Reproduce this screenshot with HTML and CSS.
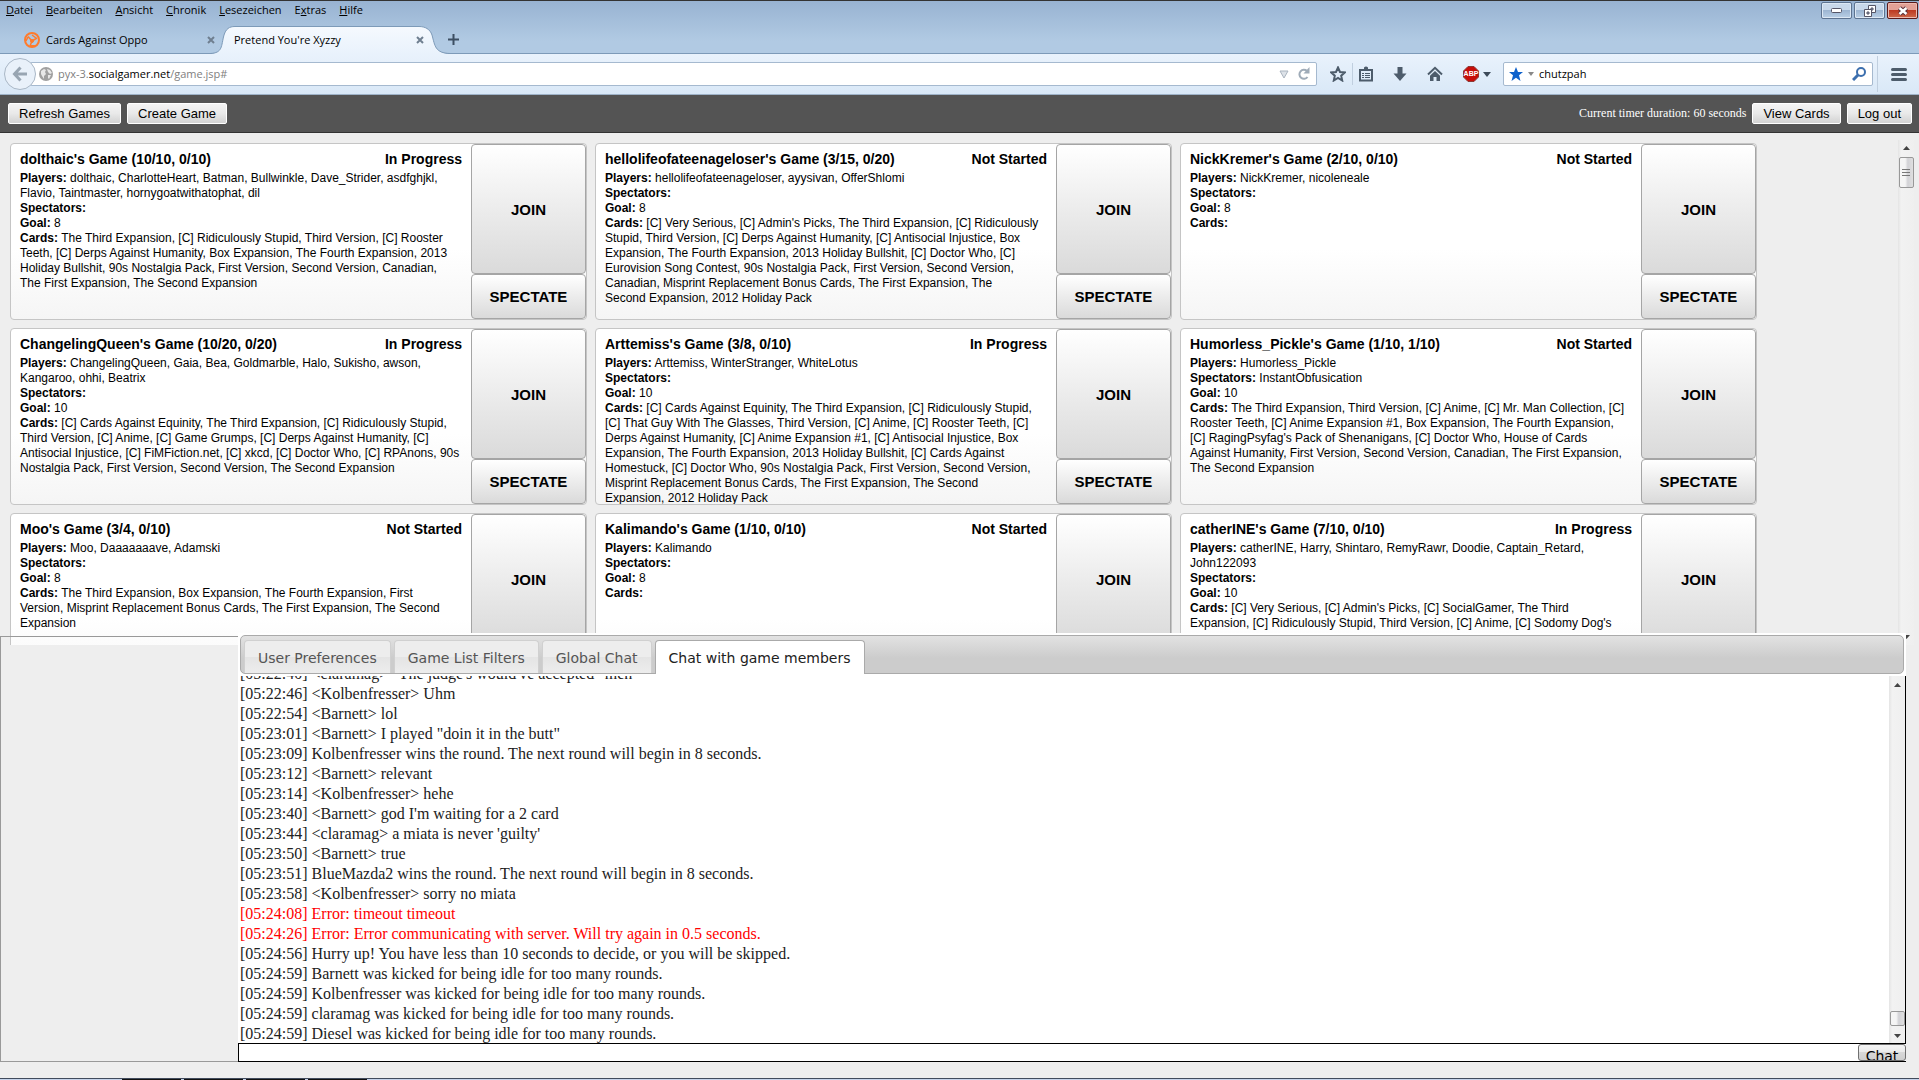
FILE: index.html
```html
<!DOCTYPE html>
<html lang="de">
<head>
<meta charset="utf-8">
<title>Pretend You're Xyzzy</title>
<link rel="stylesheet" href="styles.css">
</head>
<body>
<div class="chrome">
  <div class="menu-row">
    <nav class="menu">
      <a href="#"><u>D</u>atei</a><a href="#"><u>B</u>earbeiten</a><a href="#"><u>A</u>nsicht</a><a href="#"><u>C</u>hronik</a><a href="#"><u>L</u>esezeichen</a><a href="#">E<u>x</u>tras</a><a href="#"><u>H</u>ilfe</a>
    </nav>
    <div class="window-buttons">
      <button aria-label="Minimieren"><svg width="11" height="5" viewBox="0 0 11 5"><rect x=".5" y=".5" width="10" height="4" rx="1" fill="#fff" stroke="#556"/></svg></button>
      <button aria-label="Verkleinern"><svg width="12" height="12" viewBox="0 0 12 12"><path d="M4.500 .5h7v7h-7z" fill="#fff" stroke="#556"/><path d="M7 3h2v2H7z" fill="#9ab" stroke="#556"/><path d="M.5 4.500h7v7h-7z" fill="#fff" stroke="#556"/><path d="M3 7h2v2H3z" fill="#9ab" stroke="#556"/></svg></button>
      <button class="win-close" aria-label="Schließen"><svg width="12" height="10" viewBox="0 0 12 10"><path d="M2.500 2l7 6M9.500 2l-7 6" stroke="#5b3038" stroke-width="4.500"/><path d="M2.500 2l7 6M9.500 2l-7 6" stroke="#fff" stroke-width="2.500"/></svg></button>
    </div>
  </div>
  <div class="tab-strip">
    <div class="tab">
      <svg width="16" height="16" viewBox="0 0 16 16" fill="none" stroke="#ff7b2c"><circle cx="8" cy="8" r="7" stroke-width="2"/><path d="M8 9L4 4.500M8 9l5-3M8 9l-2 5M4 5l-2 4M12 6L8 3M6 13l5 1" stroke-width="1.500"/><circle cx="8" cy="9" r="1.500" fill="#ff7b2c"/></svg>
      <span>Cards Against Oppo</span>
      <button class="tab-close" aria-label="Tab schließen"><svg width="8" height="8" viewBox="0 0 8 8"><path d="M1 1l6 6M7 1L1 7" stroke="#6f7f90" stroke-width="2"/></svg></button>
    </div>
    <div class="tab tab-active">
      <svg class="tab-shape" width="240" height="28" viewBox="0 0 240 28"><defs><linearGradient id="tabfill" x2="0" y2="1"><stop offset="0" stop-color="#f5f9fe"/><stop offset="1" stop-color="#e9f2fc"/></linearGradient></defs><path d="M0 28C13 27 11 20 14 9C16 3 19 .5 25 .5H209C215 .5 220 3 222 9C225 20 225 27 240 28Z" fill="url(#tabfill)"/><path d="M0 27.500C13 27 11 20 14 9C16 3 19 .5 25 .5H209C215 .5 220 3 222 9C225 20 225 27 240 27.500" fill="none" stroke="#7d9ab8"/></svg>
      <span>Pretend You're Xyzzy</span>
      <button class="tab-close" aria-label="Tab schließen"><svg width="8" height="8" viewBox="0 0 8 8"><path d="M1 1l6 6M7 1L1 7" stroke="#6f7f90" stroke-width="2"/></svg></button>
    </div>
    <button class="new-tab" aria-label="Neuer Tab"><svg width="11" height="11" viewBox="0 0 11 11"><path d="M5.500 0v11M0 5.500h11" stroke="#3d4f63" stroke-width="2"/></svg></button>
  </div>
  <div class="nav-bar">
    <button class="back" aria-label="Zurück"><svg width="16" height="16" viewBox="0 0 16 16"><path d="M8.500 1.500L2.500 8l6 6.500M3 8h12" fill="none" stroke="#98a5b2" stroke-width="3"/></svg></button>
    <div class="url-box">
      <svg width="14" height="14" viewBox="0 0 14 14"><circle cx="7" cy="7" r="7" fill="#a0a0a0"/><path d="M2 4l3-2 2 1-1 2 1 2-2 2 0 3-2-3-1-2zM8 2l3 1 2 3-2 1-2-2zM9 8l3 0-2 4-1-1z" fill="#e8e8e8"/></svg>
      <a class="url" href="#">pyx-3.<b>socialgamer.net</b>/game.jsp#</a>
      <svg width="10" height="9" viewBox="0 0 10 9"><path d="M1 1h8L5 8z" fill="#dde2e8" stroke="#aab4bf"/></svg>
      <button class="plain" aria-label="Neu laden"><svg width="12" height="14" viewBox="0 0 12 14"><path d="M9.500 10A4.500 4.500 0 1 1 9 4" fill="none" stroke="#9fabb8" stroke-width="2"/><path d="M11.500 0v6.500H5.500z" fill="#9fabb8"/></svg></button>
    </div>
    <div class="tools">
      <button class="plain" aria-label="Lesezeichen"><svg width="16" height="16" viewBox="0 0 16 16"><path d="M8 1.500l2 4.500 4.800.5-3.600 3.200 1 4.800L8 12l-4.200 2.500 1-4.800L1.200 6.500 6 6z" fill="none" stroke="#4d5c6b" stroke-width="2"/></svg></button>
      <i class="sep"></i>
      <button class="plain" aria-label="Lesezeichenliste"><svg width="14" height="16" viewBox="0 0 14 16"><path d="M1 4h12v10.500H1z" fill="none" stroke="#4d5c6b" stroke-width="2"/><path d="M3 5V3h2V1.500Q7-.5 9 1.500V3h2v2z" fill="#4d5c6b"/><path d="M3 7h2v1H3zM6 7h5v1H6zM3 9h2v1H3zM6 9h5v1H6zM3 11h2v1H3zM6 11h5v1H6z" fill="#4d5c6b"/></svg></button>
      <button class="plain" aria-label="Downloads"><svg width="14" height="16" viewBox="0 0 14 16"><path d="M4.500 1h5v6.500H13.500L7 15 .5 7.500h4z" fill="#4d5c6b"/></svg></button>
      <button class="plain" aria-label="Startseite"><svg width="16" height="16" viewBox="0 0 16 16"><path d="M1 8.500L8 1.800l7 6.700" fill="none" stroke="#4d5c6b" stroke-width="2"/><path d="M8 5l5 4.800V15H9.500v-4h-3v4H3V9.800z" fill="#4d5c6b"/></svg></button>
      <button class="plain abp" aria-label="Adblock Plus"><svg width="16" height="16" viewBox="0 0 16 16"><path d="M5 .5h6L15.500 5v6L11 15.500H5L.5 11V5z" fill="#c70d09" stroke="#8b3a35"/></svg><b>ABP</b></button>
      <svg class="caret" width="8" height="5" viewBox="0 0 8 5"><path d="M0 0h8L4 5z" fill="#3c4a59"/></svg>
    </div>
    <div class="search-box">
      <svg width="14" height="14" viewBox="0 0 14 14"><path d="M7 0l2 5h5l-4 3.300L11.500 14 7 10.700 2.500 14 4 8.300 0 5h5z" fill="#0f62cc"/></svg>
      <svg width="6" height="4" viewBox="0 0 6 4"><path d="M0 0h6L3 4z" fill="#888"/></svg>
      <input type="text" value="chutzpah" aria-label="Suche">
      <button class="plain" aria-label="Suchen"><svg width="14" height="14" viewBox="0 0 14 14"><circle cx="9" cy="5" r="4" fill="none" stroke="#3c6fae" stroke-width="2"/><path d="M6 8l-5 5" stroke="#3c6fae" stroke-width="3"/></svg></button>
    </div>
    <i class="sep sep-tall"></i>
    <button class="plain burger" aria-label="Menü"><svg width="16" height="13" viewBox="0 0 16 13"><path d="M1.500 1.500h13M1.500 6.500h13M1.500 11.500h13" stroke="#4d5c6b" stroke-width="3" stroke-linecap="round"/></svg></button>
  </div>
</div>

<header class="top-bar">
  <button class="btn">Refresh Games</button>
  <button class="btn">Create Game</button>
  <span class="timer">Current timer duration: 60 seconds</span>
  <button class="btn">View Cards</button>
  <button class="btn">Log out</button>
</header>

<main class="games">
  <div class="game-list">
    <article class="game">
      <div class="info"><h2>dolthaic's Game (10/10, 0/10)<span>In Progress</span></h2>
        <p><b>Players:</b> dolthaic, CharlotteHeart, Batman, Bullwinkle, Dave_Strider, asdfghjkl,<br>Flavio, Taintmaster, hornygoatwithatophat, dil</p>
        <p><b>Spectators:</b></p><p><b>Goal:</b> 8</p>
        <p><b>Cards:</b> The Third Expansion, [C] Ridiculously Stupid, Third Version, [C] Rooster<br>Teeth, [C] Derps Against Humanity, Box Expansion, The Fourth Expansion, 2013<br>Holiday Bullshit, 90s Nostalgia Pack, First Version, Second Version, Canadian,<br>The First Expansion, The Second Expansion</p></div>
      <div class="actions"><button class="join">JOIN</button><button class="spectate">SPECTATE</button></div>
    </article>
    <article class="game">
      <div class="info"><h2>hellolifeofateenageloser's Game (3/15, 0/20)<span>Not Started</span></h2>
        <p><b>Players:</b> hellolifeofateenageloser, ayysivan, OfferShlomi</p>
        <p><b>Spectators:</b></p><p><b>Goal:</b> 8</p>
        <p><b>Cards:</b> [C] Very Serious, [C] Admin's Picks, The Third Expansion, [C] Ridiculously<br>Stupid, Third Version, [C] Derps Against Humanity, [C] Antisocial Injustice, Box<br>Expansion, The Fourth Expansion, 2013 Holiday Bullshit, [C] Doctor Who, [C]<br>Eurovision Song Contest, 90s Nostalgia Pack, First Version, Second Version,<br>Canadian, Misprint Replacement Bonus Cards, The First Expansion, The<br>Second Expansion, 2012 Holiday Pack</p></div>
      <div class="actions"><button class="join">JOIN</button><button class="spectate">SPECTATE</button></div>
    </article>
    <article class="game">
      <div class="info"><h2>NickKremer's Game (2/10, 0/10)<span>Not Started</span></h2>
        <p><b>Players:</b> NickKremer, nicoleneale</p>
        <p><b>Spectators:</b></p><p><b>Goal:</b> 8</p>
        <p><b>Cards:</b></p></div>
      <div class="actions"><button class="join">JOIN</button><button class="spectate">SPECTATE</button></div>
    </article>
    <article class="game">
      <div class="info"><h2>ChangelingQueen's Game (10/20, 0/20)<span>In Progress</span></h2>
        <p><b>Players:</b> ChangelingQueen, Gaia, Bea, Goldmarble, Halo, Sukisho, awson,<br>Kangaroo, ohhi, Beatrix</p>
        <p><b>Spectators:</b></p><p><b>Goal:</b> 10</p>
        <p><b>Cards:</b> [C] Cards Against Equinity, The Third Expansion, [C] Ridiculously Stupid,<br>Third Version, [C] Anime, [C] Game Grumps, [C] Derps Against Humanity, [C]<br>Antisocial Injustice, [C] FiMFiction.net, [C] xkcd, [C] Doctor Who, [C] RPAnons, 90s<br>Nostalgia Pack, First Version, Second Version, The Second Expansion</p></div>
      <div class="actions"><button class="join">JOIN</button><button class="spectate">SPECTATE</button></div>
    </article>
    <article class="game">
      <div class="info"><h2>Arttemiss's Game (3/8, 0/10)<span>In Progress</span></h2>
        <p><b>Players:</b> Arttemiss, WinterStranger, WhiteLotus</p>
        <p><b>Spectators:</b></p><p><b>Goal:</b> 10</p>
        <p><b>Cards:</b> [C] Cards Against Equinity, The Third Expansion, [C] Ridiculously Stupid,<br>[C] That Guy With The Glasses, Third Version, [C] Anime, [C] Rooster Teeth, [C]<br>Derps Against Humanity, [C] Anime Expansion #1, [C] Antisocial Injustice, Box<br>Expansion, The Fourth Expansion, 2013 Holiday Bullshit, [C] Cards Against<br>Homestuck, [C] Doctor Who, 90s Nostalgia Pack, First Version, Second Version,<br>Misprint Replacement Bonus Cards, The First Expansion, The Second<br>Expansion, 2012 Holiday Pack</p></div>
      <div class="actions"><button class="join">JOIN</button><button class="spectate">SPECTATE</button></div>
    </article>
    <article class="game">
      <div class="info"><h2>Humorless_Pickle's Game (1/10, 1/10)<span>Not Started</span></h2>
        <p><b>Players:</b> Humorless_Pickle</p>
        <p><b>Spectators:</b> InstantObfusication</p><p><b>Goal:</b> 10</p>
        <p><b>Cards:</b> The Third Expansion, Third Version, [C] Anime, [C] Mr. Man Collection, [C]<br>Rooster Teeth, [C] Anime Expansion #1, Box Expansion, The Fourth Expansion,<br>[C] RagingPsyfag's Pack of Shenanigans, [C] Doctor Who, House of Cards<br>Against Humanity, First Version, Second Version, Canadian, The First Expansion,<br>The Second Expansion</p></div>
      <div class="actions"><button class="join">JOIN</button><button class="spectate">SPECTATE</button></div>
    </article>
    <article class="game">
      <div class="info"><h2>Moo's Game (3/4, 0/10)<span>Not Started</span></h2>
        <p><b>Players:</b> Moo, Daaaaaaave, Adamski</p>
        <p><b>Spectators:</b></p><p><b>Goal:</b> 8</p>
        <p><b>Cards:</b> The Third Expansion, Box Expansion, The Fourth Expansion, First<br>Version, Misprint Replacement Bonus Cards, The First Expansion, The Second<br>Expansion</p></div>
      <div class="actions"><button class="join">JOIN</button><button class="spectate">SPECTATE</button></div>
    </article>
    <article class="game">
      <div class="info"><h2>Kalimando's Game (1/10, 0/10)<span>Not Started</span></h2>
        <p><b>Players:</b> Kalimando</p>
        <p><b>Spectators:</b></p><p><b>Goal:</b> 8</p>
        <p><b>Cards:</b></p></div>
      <div class="actions"><button class="join">JOIN</button><button class="spectate">SPECTATE</button></div>
    </article>
    <article class="game">
      <div class="info"><h2>catherINE's Game (7/10, 0/10)<span>In Progress</span></h2>
        <p><b>Players:</b> catherINE, Harry, Shintaro, RemyRawr, Doodie, Captain_Retard,<br>John122093</p>
        <p><b>Spectators:</b></p><p><b>Goal:</b> 10</p>
        <p><b>Cards:</b> [C] Very Serious, [C] Admin's Picks, [C] SocialGamer, The Third<br>Expansion, [C] Ridiculously Stupid, Third Version, [C] Anime, [C] Sodomy Dog's</p></div>
      <div class="actions"><button class="join">JOIN</button><button class="spectate">SPECTATE</button></div>
    </article>
  </div>
  <div class="scrollbar">
    <svg class="arrow" width="7" height="4" viewBox="0 0 7 4"><path d="M0 4h7L3.500 0z" fill="#444"/></svg>
    <div class="thumb thumb-list"><svg width="8" height="8" viewBox="0 0 8 8"><path d="M0 .5h8M0 3.500h8M0 6.500h8" stroke="#777"/></svg></div>
    <svg class="arrow arrow-end" width="7" height="4" viewBox="0 0 7 4"><path d="M0 0h7L3.500 4z" fill="#444"/></svg>
  </div>
</main>

<section class="bottom">
  <aside class="side"></aside>
  <div class="chat">
    <div class="tabs">
      <a href="#">User Preferences</a><a href="#">Game List Filters</a><a href="#">Global Chat</a><a href="#" class="current">Chat with game members</a>
    </div>
    <div class="log-box">
      <div class="log">
        <p>[05:22:40] &lt;claramag&gt; "The judge's would've accepted" meh</p>
        <p>[05:22:46] &lt;Kolbenfresser&gt; Uhm</p>
        <p>[05:22:54] &lt;Barnett&gt; lol</p>
        <p>[05:23:01] &lt;Barnett&gt; I played "doin it in the butt"</p>
        <p>[05:23:09] Kolbenfresser wins the round. The next round will begin in 8 seconds.</p>
        <p>[05:23:12] &lt;Barnett&gt; relevant</p>
        <p>[05:23:14] &lt;Kolbenfresser&gt; hehe</p>
        <p>[05:23:40] &lt;Barnett&gt; god I'm waiting for a 2 card</p>
        <p>[05:23:44] &lt;claramag&gt; a miata is never 'guilty'</p>
        <p>[05:23:50] &lt;Barnett&gt; true</p>
        <p>[05:23:51] BlueMazda2 wins the round. The next round will begin in 8 seconds.</p>
        <p>[05:23:58] &lt;Kolbenfresser&gt; sorry no miata</p>
        <p class="error">[05:24:08] Error: timeout timeout</p>
        <p class="error">[05:24:26] Error: Error communicating with server. Will try again in 0.5 seconds.</p>
        <p>[05:24:56] Hurry up! You have less than 10 seconds to decide, or you will be skipped.</p>
        <p>[05:24:59] Barnett was kicked for being idle for too many rounds.</p>
        <p>[05:24:59] Kolbenfresser was kicked for being idle for too many rounds.</p>
        <p>[05:24:59] claramag was kicked for being idle for too many rounds.</p>
        <p>[05:24:59] Diesel was kicked for being idle for too many rounds.</p>
      </div>
      <div class="scrollbar scrollbar-log">
        <svg class="arrow" width="7" height="4" viewBox="0 0 7 4"><path d="M0 4h7L3.500 0z" fill="#444"/></svg>
        <div class="thumb thumb-log"></div>
        <svg class="arrow arrow-end" width="7" height="4" viewBox="0 0 7 4"><path d="M0 0h7L3.500 4z" fill="#444"/></svg>
      </div>
    </div>
    <form class="entry">
      <input type="text" aria-label="Chat">
      <button type="button">Chat</button>
    </form>
  </div>
</section>
<footer class="taskbar"><i></i><i></i><i></i><i></i></footer>
</body>
</html>
```
FILE: styles.css
```css
* { box-sizing: border-box; }
body {
  margin: 0;
  height: 100vh;
  overflow: hidden;
  display: flex;
  flex-direction: column;
  background: #eee;
  color: #000;
  font-family: "Liberation Serif", serif;
}
a { color: inherit; text-decoration: none; }
svg { display: block; flex: none; }
button { margin: 0; padding: 0; color: #000; }
p, h2 { margin: 0; }
.plain { background: none; border: 0; }

/* browser frame */
.chrome {
  flex: none;
  border-top: 1px solid #333;
  background: linear-gradient(#98b3d2, #b1cae3 40px);
  font: 11px/16px "Open Sans", sans-serif;
}
.menu-row { display: flex; justify-content: space-between; height: 25px; padding: 1px 1px 0 6px; }
.menu { display: flex; gap: 13px; }
.window-buttons { display: flex; gap: 2px; }
.window-buttons button {
  width: 31px;
  height: 17px;
  display: grid;
  place-items: center;
  border: 1px solid #5d7390;
  border-radius: 2px;
  background: linear-gradient(#c8d8ea 45%, #9db6d2 50%, #b9cfe6);
  box-shadow: inset 0 0 0 1px #dce8f4;
}
.window-buttons .win-close {
  border-color: #5b1a1a;
  background: linear-gradient(#e2a196 45%, #bd3a22 50%, #cf6a4c);
  box-shadow: inset 0 0 0 1px #eebbb0;
}
.tab-strip { display: flex; height: 28px; padding-left: 22px; border-bottom: 1px solid #7d9ab8; }
.tab { display: flex; align-items: center; gap: 6px; width: 193px; height: 28px; padding: 0 0 0 2px; }
.tab span { flex: 1; position: relative; }
.tab-close { position: relative; width: 8px; height: 8px; border: 0; background: none; }
.tab-active { position: relative; width: 209px; padding-left: 19px; }
.tab-shape { position: absolute; left: -5px; top: 0; }
.new-tab { width: 11px; margin-left: 24px; border: 0; background: none; }
.nav-bar {
  display: flex;
  align-items: center;
  height: 41px;
  padding: 0 12px 0 4px;
  background: linear-gradient(#e9f2fc, #d9e8f7);
  border-bottom: 1px solid #9fb3c8;
}
.back {
  position: relative;
  width: 32px;
  height: 32px;
  flex: none;
  display: grid;
  place-items: center;
  border: 1px solid #a9b7c6;
  border-radius: 50%;
  background: #e9f1fa;
}
.url-box, .search-box {
  display: flex;
  align-items: center;
  height: 24px;
  border: 1px solid #a5b9cf;
  border-radius: 2px;
  background: #fff;
}
.url-box { flex: 1; margin-left: -6px; padding: 0 6px 0 8px; gap: 5px; }
.url { flex: 1; color: #808080; }
.url b { font-weight: 400; color: #000; }
.url-box .plain { margin-left: 4px; }
.tools { display: flex; align-items: center; margin-left: 13px; }
.tools .plain + .plain { margin-left: 20px; }
.sep { width: 1px; height: 22px; margin: 0 6px; background: #c0cfdf; }
.sep-tall { height: 36px; margin: 0 13px 0 4px; }
.tools .abp { position: relative; }
.abp b { position: absolute; inset: 0; font: 700 7px/16px "Liberation Sans", sans-serif; color: #fff; text-align: center; }
.caret { margin-left: 4px; }
.search-box { width: 370px; margin-left: 12px; padding: 0 6px 0 5px; gap: 5px; }
.search-box input { flex: 1; min-width: 0; border: 0; padding: 0; outline: 0; background: none; font: 11px/16px "Open Sans", sans-serif; }

/* game toolbar */
.top-bar {
  flex: none;
  display: flex;
  align-items: center;
  height: 38px;
  padding: 0 7px 0 8px;
  gap: 6px;
  background: #545454;
  border-bottom: 1px solid #333;
}
.btn {
  height: 21px;
  padding: 0 10px;
  border: 1px solid #fff;
  border-radius: 2px;
  background: linear-gradient(#f4f4f4, #e9e9e9 50%, #d2d2d2);
  font: 13px/19px "Liberation Sans", sans-serif;
}
.timer { margin-left: auto; color: #fff; font-size: 12px; }

/* list of games */
.games { flex: 1; min-height: 0; overflow: hidden; display: flex; padding: 7px 5px 0 10px; }
.game-list {
  flex: 1;
  display: grid;
  grid-template-columns: repeat(auto-fill, 577px);
  grid-auto-rows: 177px;
  gap: 8px;
  padding-top: 3px;
}
.game {
  display: flex;
  overflow: hidden;
  border: 1px solid #c5c5c5;
  border-radius: 4px;
  background: linear-gradient(#fff 60%, #f5f5f5);
}
.info { flex: 1; padding: 7px 9px 0; font: 12px/15px "Liberation Sans", sans-serif; white-space: nowrap; }
.info h2 { display: flex; justify-content: space-between; margin-bottom: 3px; font-size: 14px; line-height: 17px; }
.actions { display: flex; flex-direction: column; width: 115px; }
.actions button {
  border: 1px solid #a5a5a5;
  border-radius: 4px;
  background: linear-gradient(#fff, #ececec 50%, #dadada);
  font: 700 15px "Liberation Sans", sans-serif;
}
.join { flex: 3; }
.spectate { flex: 1; }

.scrollbar {
  width: 16px;
  display: flex;
  flex-direction: column;
  align-items: center;
  padding: 6px 0;
  background: linear-gradient(90deg, #e4e4e4, #f2f2f2 20%, #efefef);
}
.arrow-end { margin-top: auto; }
.thumb {
  width: 15px;
  display: grid;
  place-items: center;
  border: 1px solid #989898;
  border-radius: 2px;
  background: linear-gradient(90deg, #f5f5f5 40%, #d2d2d6 60%, #e0e0e0);
}
.thumb-list { height: 31px; margin-top: 7px; }

/* chat area */
.bottom { position: relative; flex: none; display: flex; height: calc(40vh - 3px); margin: -12px 13px 16px 0; }
.side { width: 238px; margin-top: 3px; border: solid #999; border-width: 1px 0 1px 1px; }
.chat { flex: 1; display: flex; flex-direction: column; padding-top: 2px; background: #fff; }
.tabs {
  display: flex;
  align-items: flex-end;
  gap: 3px;
  height: 39px;
  margin: 0 2px;
  padding-left: 3px;
  border: 1px solid #aaa;
  border-radius: 5px;
  background: linear-gradient(#e2e2e2, #ccc 60%);
  font: 14px/34px "DejaVu Sans", Verdana, sans-serif;
}
.tabs a {
  height: 33px;
  padding: 0 13px;
  border: 1px solid #d0d0d0;
  border-bottom: 0;
  border-radius: 4px 4px 0 0;
  background: linear-gradient(#ededed 50%, #e4e4e4 50%, #ededed);
  color: #555;
}
.tabs .current { height: 34px; margin-bottom: -1px; border-color: #aaa; background: #fff; color: #212121; }
.log-box {
  flex: 1;
  min-height: 0;
  display: flex;
  margin-top: 2px;
  border-right: 1px solid #000;
}
.log {
  flex: 1;
  overflow: hidden;
  display: flex;
  flex-direction: column;
  justify-content: flex-end;
  padding-left: 2px;
  font-size: 16px;
  line-height: 20px;
  color: #212121;
}
.log p { flex: none; }
.error { color: #f00; }
.scrollbar-log { width: 16px; padding-top: 7px; }
.thumb-log { height: 15px; margin-top: auto; margin-bottom: 8px; }
.scrollbar-log .arrow-end { margin-top: 0; }
.entry { display: flex; height: 19px; margin: -1px 0 0; border: 1px solid #000; border-right: 0; background: #fff; overflow: hidden; }
.entry input { flex: 1; min-width: 0; padding: 0 2px; border: 0; outline: 0; }
.entry button {
  width: 48px;
  border: 1px solid #707070;
  border-radius: 3px;
  background: linear-gradient(#f4f4f4, #ebebeb 45%, #d8d8d8 50%, #cfcfcf);
  font: 14px/22px "DejaVu Sans", Verdana, sans-serif;
  overflow: hidden;
}

/* upper edge of the desktop task bar */
.taskbar { flex: none; display: flex; gap: 3px; height: 2px; padding-left: 122px; border-top: 1px solid #414b5c; background: #c5d3ea; }
.taskbar i { width: 59px; background: #111; }
```
